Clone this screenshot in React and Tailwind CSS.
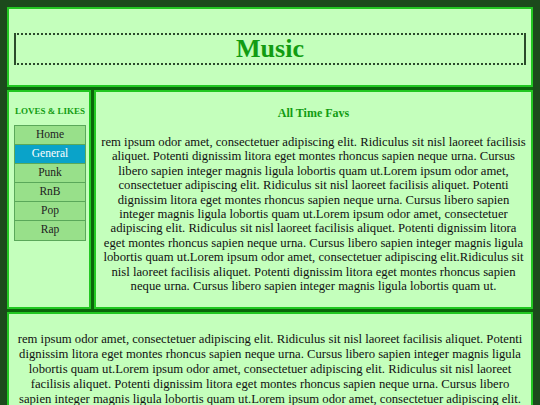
import React from 'react';

const NAV = ['Home', 'General', 'Punk', 'RnB', 'Pop', 'Rap'];

const LOREM =
  'rem ipsum odor amet, consectetuer adipiscing elit. Ridiculus sit nisl laoreet facilisis aliquet. Potenti dignissim litora eget montes rhoncus sapien neque urna. Cursus libero sapien integer magnis ligula lobortis quam ut.';

const MAIN_TEXT =
  LOREM +
  'Lorem ipsum odor amet, consectetuer adipiscing elit. Ridiculus sit nisl laoreet facilisis aliquet. Potenti dignissim litora eget montes rhoncus sapien neque urna. Cursus libero sapien integer magnis ligula lobortis quam ut.' +
  'Lorem ipsum odor amet, consectetuer adipiscing elit. Ridiculus sit nisl laoreet facilisis aliquet. Potenti dignissim litora eget montes rhoncus sapien neque urna. Cursus libero sapien integer magnis ligula lobortis quam ut.' +
  'Lorem ipsum odor amet, consectetuer adipiscing elit.Ridiculus sit nisl laoreet facilisis aliquet. Potenti dignissim litora eget montes rhoncus sapien neque urna. Cursus libero sapien integer magnis ligula lobortis quam ut.';

const FOOT_TEXT =
  LOREM +
  'Lorem ipsum odor amet, consectetuer adipiscing elit. Ridiculus sit nisl laoreet facilisis aliquet. Potenti dignissim litora eget montes rhoncus sapien neque urna. Cursus libero sapien integer magnis ligula lobortis quam ut.' +
  'Lorem ipsum odor amet, consectetuer adipiscing elit. Ridiculus sit nisl laoreet facilisis aliquet. Potenti dignissim litora eget montes rhoncus sapien neque urna. Cursus libero sapien integer magnis ligula lobortis quam ut.';

export default function App() {
  return (
    <div className="min-h-screen bg-[#1c4a1c] p-[7px] font-['Liberation_Serif',serif] text-[#111]">
      <div className="grid grid-cols-[84px_1fr] gap-[3px] bg-[#0b650b]">
        <header className="col-span-2 border-2 border-[#22c722] bg-[#c4ffbc] px-[5px] pt-[24px] pb-[20px]">
          <div className="flex h-[32px] items-center justify-center border-2 border-[#2b4a2b] [border-top-style:dotted] [border-bottom-style:dotted]">
            <h1 className="text-[26px] font-bold leading-none text-[#129c12]">Music</h1>
          </div>
        </header>

        <aside className="border-2 border-[#22c722] bg-[#c4ffbc] pl-[5px] pr-[3px] pt-[13px]">
          <h3 className="whitespace-nowrap text-center text-[9px] font-bold uppercase text-[#129c12]">
            Loves &amp; Likes
          </h3>
          <ul className="mt-[6px] border border-[#5aa85a]">
            {NAV.map((item) => (
              <li
                key={item}
                className={`flex h-[19px] items-center justify-center border-b border-[#5aa85a] text-[11.5px] last:border-b-0 ${
                  item === 'General' ? 'bg-[#0aa3c9] text-white' : 'bg-[#98e08a] text-[#222]'
                }`}
              >
                {item}
              </li>
            ))}
          </ul>
        </aside>

        <main className="border-2 border-[#22c722] bg-[#c4ffbc] px-[4px] pt-[12px] pb-[14px] text-center">
          <h2 className="text-[12px] font-bold text-[#129c12]">All Time Favs</h2>
          <p className="mt-[13px] text-[12.7px] leading-[14.4px]">{MAIN_TEXT}</p>
        </main>

        <footer className="col-span-2 border-2 border-[#22c722] bg-[#c4ffbc] px-[6px] pt-[18px] pb-[20px] text-center">
          <p className="text-[12.7px] leading-[14.8px]">{FOOT_TEXT}</p>
        </footer>
      </div>
    </div>
  );
}
